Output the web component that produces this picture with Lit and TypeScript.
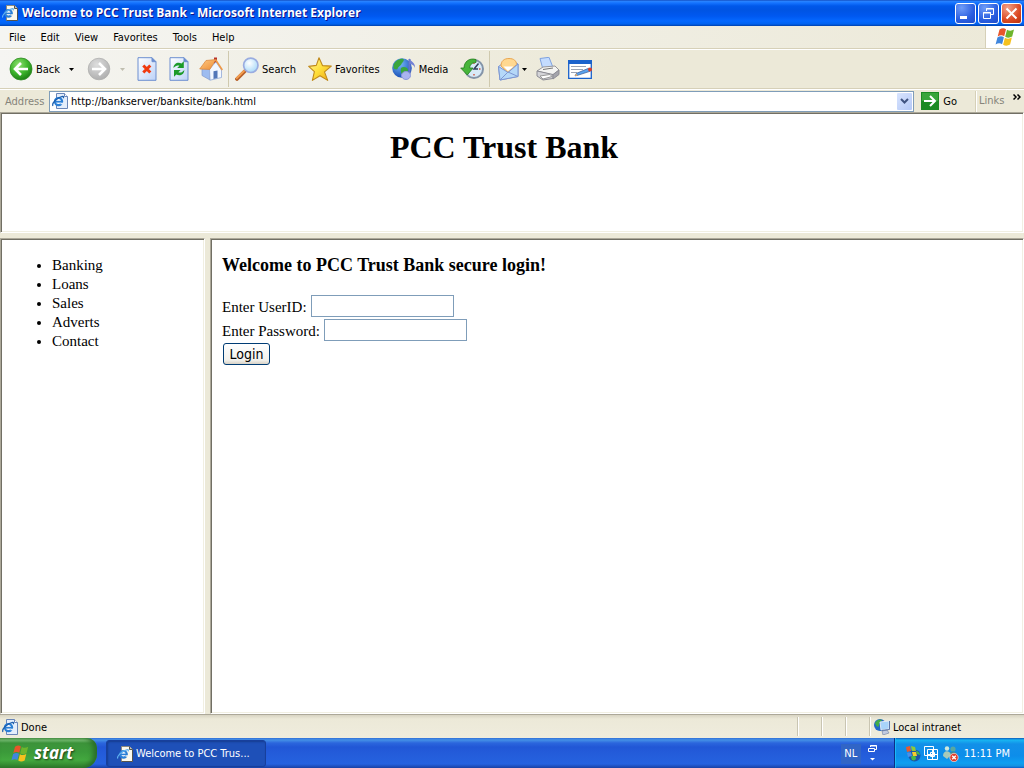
import { LitElement, html, svg, css } from "lit";
import { customElement } from "lit/decorators.js";

const pageIcon = svg`
  <path d="M4.500 .5h8l3 3v12h-11z" fill="#e4eefb" stroke="#6a86b8"/>
  <path d="M12.500 .5v3h3" fill="#fff" stroke="#6a86b8"/>
  <circle cx="6.500" cy="8.600" r="3.600" fill="#fff" stroke="#2a7fd6" stroke-width="2.200"/>
  <path d="M3 8.700h7.400" stroke="#2a7fd6" stroke-width="1.800"/>
  <path d="M8.500 9.700h3.500v1.600h-3.500z" fill="#e4eefb"/>
  <path d="M.9 12.900C-.4 10 5 4.500 10.600 3.400c1.200-.1 1.200.8.5 1.800" fill="none" stroke="#1c5fae" stroke-width="1.200"/>`;

const darkPageIcon = svg`
  <path d="M4.500 .5h8l3 3v12h-11z" fill="#fbf9ee" stroke="#8c8a80"/>
  <path d="M12.500 .5v3h3" fill="#c8c6ba" stroke="#55534c"/>
  <path d="M4.500 15.500h11v-12" fill="none" stroke="#55534c"/>
  <circle cx="6.500" cy="8.300" r="3.300" fill="#fff" stroke="#2a7fd6" stroke-width="2.200"/>
  <path d="M3.500 8.400h6.500" stroke="#2a7fd6" stroke-width="1.600"/>
  <path d="M8.500 9.300h3v1.400h-3z" fill="#fbf9ee"/>
  <path d="M.7 12.600C-.4 10 5 4.800 10.400 3.600c1.200-.1 1.200.8.5 1.800" fill="none" stroke="#5fb0f0" stroke-width="1.200"/>`;

const flag = svg`
  <path d="M5.500 2.500c2.500-1.500 4.500-1.500 6.500-.3l-1.800 7c-2-1.200-4-1.200-6.500.3z" fill="#e8562a"/>
  <path d="M13 2.800c2.300 1.300 4.500 1.300 7-.2l-1.800 7c-2.500 1.500-4.700 1.500-7 .2z" fill="#6db52c"/>
  <path d="M3.400 10.500c2.500-1.500 4.500-1.500 6.500-.3l-1.800 7c-2-1.200-4-1.200-6.500.3z" fill="#3f86dd"/>
  <path d="M10.900 10.800c2.300 1.300 4.500 1.300 7-.2l-1.800 7c-2.500 1.500-4.700 1.500-7 .2z" fill="#f5c11e"/>`;

const icon = (w: number, h: number, body: unknown, box = `0 0 ${w} ${h}`) =>
  html`<svg width=${w} height=${h} viewBox=${box} aria-hidden="true">${body}</svg>`;

const caret = (color: string) =>
  icon(5, 3, svg`<path d="M0 0h5L2.500 3z" fill=${color}/>`);

const art = {
  back: svg`
    <defs><radialGradient id="bg" cx=".4" cy=".3" r=".75"><stop offset="0" stop-color="#8fe070"/><stop offset=".55" stop-color="#3db52c"/><stop offset="1" stop-color="#187a12"/></radialGradient></defs>
    <circle cx="12" cy="12" r="11" fill="url(#bg)" stroke="#2f8a22" stroke-width=".8"/>
    <path d="M19 12H7M12 6l-6 6 6 6" fill="none" stroke="#fff" stroke-width="2.600"/>`,
  forward: svg`
    <defs><radialGradient id="fg" cx=".4" cy=".3" r=".8"><stop offset="0" stop-color="#dedede"/><stop offset="1" stop-color="#a9a9a9"/></radialGradient></defs>
    <circle cx="12" cy="12" r="10.800" fill="url(#fg)" stroke="#b0b0ae" stroke-width=".8"/>
    <path d="M5 12h12M12 6l6 6-6 6" fill="none" stroke="#fff" stroke-width="2.600"/>`,
  stop: svg`
    <defs><linearGradient id="sp" x2="1" y2="1"><stop offset="0" stop-color="#fff"/><stop offset="1" stop-color="#bcd2f8"/></linearGradient></defs>
    <path d="M3 .7h14l4 4v18.600h-18z" fill="url(#sp)" stroke="#6d8fd0"/>
    <path d="M17 .7v4h4" fill="#6d8fd0" stroke="#6d8fd0"/>
    <path d="M8.300 8.500l7 7M15.300 8.500l-7 7" stroke="#f03a10" stroke-width="3"/>`,
  refresh: svg`
    <path d="M3 .7h14l4 4v18.600h-18z" fill="url(#sp)" stroke="#6d8fd0"/>
    <path d="M17 .7v4h4" fill="#6d8fd0" stroke="#6d8fd0"/>
    <path d="M6.500 11c0-4.500 4.500-6.500 8-4.500l2.300-2.300V11h-6.600l2.200-2.200c-2-1-4 0-5.900 2.200z" fill="#1c9a2a"/>
    <path d="M17.300 13c0 4.500-4.500 6.500-8 4.500L7 19.800V13h6.600l-2.200 2.200c2 1 4 0 5.900-2.200z" fill="#1c9a2a"/>`,
  home: svg`
    <defs><linearGradient id="rf" x2="1" y2="1"><stop offset="0" stop-color="#fdca85"/><stop offset="1" stop-color="#ee8c34"/></linearGradient></defs>
    <path d="M15 .5h3v6h-3z" fill="#b8322a"/>
    <path d="M3 11v7.500l8 4.500V10z" fill="#9dbcf0" stroke="#7f98cc" stroke-width=".7"/>
    <path d="M10.500 12L17 5l5.500 8v7.500L11 23.200z" fill="#f2f7ff" stroke="#8fa8d8" stroke-width=".8"/>
    <path d="M14.500 14.200l4-.8v7.500l-4 1z" fill="#5377b8"/>
    <path d="M.7 12L7 3.500 17 2.500 10.800 12.500z" fill="url(#rf)" stroke="#d98238" stroke-width=".7"/>
    <path d="M16.600 2.800L23.300 13" stroke="#ee9846" stroke-width="1.600"/>`,
  search: svg`
    <defs><radialGradient id="ln" cx=".4" cy=".35" r=".7"><stop offset="0" stop-color="#fff"/><stop offset="1" stop-color="#a5d8f8"/></radialGradient></defs>
    <path d="M2 22l8-8" stroke="#b8602a" stroke-width="3.800" stroke-linecap="round"/>
    <path d="M1.800 21.200l7.300-7.300" stroke="#f6a050" stroke-width="1.800" stroke-linecap="round"/>
    <circle cx="15.800" cy="8.300" r="7.200" fill="url(#ln)" stroke="#9aace0" stroke-width="1.700"/>`,
  star: svg`
    <defs><linearGradient id="st" x2="1" y2="1"><stop offset="0" stop-color="#fff7a8"/><stop offset=".5" stop-color="#ffdf3a"/><stop offset="1" stop-color="#eda616"/></linearGradient></defs>
    <path d="M11 .8l3.500 7.800 8.800.5-6.800 5.800 3.200 8.500-7.700-4.700-7.600 4.700 2-8.700L.7 9.400l7.600-1z" fill="url(#st)" stroke="#c08a1c" stroke-width="1.100" stroke-linejoin="round"/>`,
  media: svg`
    <defs><radialGradient id="gl" cx=".4" cy=".3" r=".8"><stop offset="0" stop-color="#74b8f8"/><stop offset="1" stop-color="#0b3fae"/></radialGradient></defs>
    <circle cx="10" cy="11" r="9.800" fill="url(#gl)"/>
    <path d="M1.500 8c2-5 7-7 10-6 1 2-1 3-2 5-1 2-3 2-4 5-1 1-3.500 0-4-1zM9 11c2-2 7-1 7 2s-4 7-5 6-3-5-2-8z" fill="#3aa63e"/>
    <path d="M17.500 2v15" stroke="#6474c8" stroke-width="2"/>
    <path d="M17.500 1c1 4 6 4 5.500 10-1-3-3-4-5.500-4z" fill="#7280d4"/>
    <ellipse cx="14" cy="18.500" rx="4.500" ry="4" fill="#aab4f0" stroke="#8c98dc"/>`,
  history: svg`
    <circle cx="14" cy="12" r="9" fill="#d8eaf8" stroke="#8494a8" stroke-width="2"/>
    <path d="M14 5.500V7M20.500 12H19M14 18.500V17" stroke="#d0523a" stroke-width="1.400"/>
    <path d="M18.500 6.500L14 12h4" fill="none" stroke="#33405c" stroke-width="1.500"/>
    <path d="M16 2.500C9 .5 4 5 4 11H.7l6.600 7 5.700-7H9.700c0-3 2-5.500 6.300-5.500z" fill="#48b53a" stroke="#237c1e" stroke-width=".8"/>`,
  mail: svg`
    <path d="M1.500 9.500L12 2l9 5v12.500L3 23z" fill="#cfe4fb" stroke="#7d97d2"/>
    <path d="M4 9c0-5 3-7.500 8-7.500s7.500 2.500 7.500 6L11 15.500z" fill="#ffd890" stroke="#eaa650"/>
    <path d="M6.500 9.500h10L11 14z" fill="#fff"/>
    <path d="M1.500 9.500l9.500 6 10-8.500v12.500L3 23z" fill="#b5d8f8" stroke="#7d97d2"/>
    <path d="M3 23l8-8 10 4.500" fill="none" stroke="#7d97d2"/>`,
  print: svg`
    <path d="M4 1.500l9-1.200 4 10.200-10 2z" fill="#c4dcff" stroke="#7fa2e0"/>
    <path d="M1 14l6-4 12-1 4 4-6 5z" fill="#f4f4f2" stroke="#96969a"/>
    <path d="M1 14v5l6 4 10-1.500v-4z" fill="#d4d4d8" stroke="#8c8c94"/>
    <path d="M17 17.500l6-4.500v4.500l-6 4.500z" fill="#a4a4ac" stroke="#8c8c94"/>
    <path d="M4 19l10-1.500 2 2-9 2.500z" fill="#fff" stroke="#999"/>
    <path d="M7 12.500l10-1.500" stroke="#777"/>`,
  edit: svg`
    <path d="M.7 3.700h22.600v17.600H.7z" fill="#fff" stroke="#1a62cc" stroke-width="1.300"/>
    <path d="M0 3h24v4H0z" fill="#1a62cc"/>
    <path d="M3 9.500h15M3 12.500h12M3 15.500h6" stroke="#9ba4b4"/>
    <path d="M9 18.500l-2 .3 1.500-2.500 12-5 1.500 3z" fill="#5aa4f0" stroke="#3a5890" stroke-width=".7"/>
    <circle cx="22" cy="12.500" r="2" fill="#d8402c"/>
    <path d="M7 19l2.500-.3-1.200-2.200z" fill="#f2b060"/>`,
};

interface Tool {
  label: string;
  art: unknown;
  text?: string;
  menu?: string;
  kind?: string;
}

const toolGroups: Tool[][] = [
  [
    { label: "Back", art: art.back, text: "Back", menu: "#000", kind: "nav" },
    { label: "Forward", art: art.forward, menu: "#c0beb0", kind: "next" },
    { label: "Stop", art: art.stop },
    { label: "Refresh", art: art.refresh },
    { label: "Home", art: art.home },
  ],
  [
    { label: "Search", art: art.search, text: "Search", kind: "worded" },
    { label: "Favorites", art: art.star, text: "Favorites", kind: "worded" },
    { label: "Media", art: art.media, text: "Media", kind: "worded" },
    { label: "History", art: art.history },
  ],
  [
    { label: "Mail", art: art.mail, menu: "#000", kind: "mail" },
    { label: "Print", art: art.print },
    { label: "Edit", art: art.edit },
  ],
];

const base = css`
  * { box-sizing: border-box; }
  svg { display: block; flex: none; }
  button {
    font: inherit; color: inherit; background: none; border: 0; padding: 0; margin: 0;
    display: flex; align-items: center;
  }
`;

@customElement("browser-chrome")
class BrowserChrome extends LitElement {
  static styles = [base, css`
    :host { display: block; background: #ece9d8; }
    .title {
      display: flex; align-items: center; height: 26px; padding: 0 2px;
      background: linear-gradient(#0a3cae 0, #2c86ff 1px, #1473ff 3px, #0058ea 6px, #0054e3 10px, #0058f0 16px, #0468ff 21px, #0062ef 24px, #0040ab 26px);
    }
    .title h1 {
      flex: 1; margin: 0 0 0 4px; font: bold 12px/20px "Open Sans", sans-serif; color: #fff;
      text-shadow: 1px 1px #0f1089; white-space: nowrap;
    }
    .controls { display: flex; gap: 2px; }
    .controls button {
      width: 21px; height: 21px; justify-content: center; border: 1px solid #fff; border-radius: 3px;
      background: radial-gradient(circle at 30% 20%, #6f9cf8, #2a5ee0 60%, #1f4cc8);
    }
    .controls .close { background: radial-gradient(circle at 30% 20%, #f2a088, #dc4a24 60%, #b8320e); }
    .menus {
      display: flex; height: 24px; border-bottom: 1px solid #fff;
      box-shadow: inset 0 -1px #d6d0b8; background: linear-gradient(90deg, #f5f5f2, #ece9d8);
    }
    .menus nav { display: flex; flex: 1; padding-left: 1px; }
    .menus nav button { padding: 2px 8px 0; height: 22px; }
    .menus nav button + button { padding-left: 7px; }
    .brand {
      width: 39px; display: flex; justify-content: center; align-items: center;
      background: #fff; border-left: 1px solid #d6d0b8; border-bottom: 1px solid #d6d0b8;
    }
    .tools {
      display: flex; align-items: center; height: 39px; padding-left: 1px;
      border-bottom: 1px solid #d6d0b8; background: linear-gradient(90deg, #f5f5f2, #ece9d8 60%);
    }
    .group { display: flex; height: 36px; padding-right: 1px; }
    .group + .group { border-left: 1px solid #cfc9ae; padding-left: 2px; }
    .group button { padding: 0 4px; gap: 3px; }
    .group span { padding-top: 1px; }
    .group .nav { padding: 0 5px 0 8px; }
    .group .nav svg + span { margin-right: 6px; }
    .group .next { padding: 0 6px 0 8px; gap: 9px; }
    .group .worded { padding-right: 8px; }
    .group .mail { padding: 0 5px; gap: 1px; }
    .address { display: flex; align-items: center; height: 23px; border-top: 1px solid #fff; }
    .address label { width: 49px; padding: 1px 0 0 5px; color: #86847a; }
    .combo {
      flex: 1; display: flex; align-items: center; height: 21px; padding: 1px 1px 1px 2px;
      border: 1px solid #7f9db9; background: #fff;
    }
    .combo input {
      flex: 1; min-width: 0; border: 0; outline: 0; padding: 2px 0 0 3px; background: none;
      font: inherit; color: #000;
    }
    .combo button {
      width: 15px; height: 17px; justify-content: center; border-radius: 1px;
      background: linear-gradient(135deg, #d8e4fe, #b4c8f6);
    }
    .go { gap: 4px; padding: 0 18px 0 7px; }
    .go span { padding-top: 1px; }
    .links {
      display: flex; align-items: center; height: 21px; width: 49px; padding: 0 3px;
      border-left: 1px solid #d6d0b8; box-shadow: inset 1px 0 #fff; color: #86847a;
    }
    .links button { margin-left: auto; height: 12px; align-self: flex-start; }
  `];

  tool(t: Tool) {
    return html`<button class=${t.kind ?? "plain"} aria-label=${t.label} ?disabled=${t.kind === "next"}>
      ${icon(24, 24, t.art)}${t.text ? html`<span>${t.text}</span>` : ""}${t.menu ? caret(t.menu) : ""}
    </button>`;
  }

  render() {
    return html`
      <header class="title">
        ${icon(16, 16, darkPageIcon)}
        <h1>Welcome to PCC Trust Bank - Microsoft Internet Explorer</h1>
        <div class="controls">
          <button aria-label="Minimize">${icon(13, 13, svg`<path d="M1 9h7v3H1z" fill="#fff"/>`)}</button>
          <button aria-label="Restore">${icon(13, 13, svg`<path d="M4.500 4V1.500h7v6H9M4 2h8M1.500 5.500h7v6h-7zM1 6h8" fill="none" stroke="#fff"/>`)}</button>
          <button class="close" aria-label="Close">${icon(13, 13, svg`<path d="M1.500 1.500l10 10M11.500 1.500l-10 10" stroke="#fff" stroke-width="2"/>`)}</button>
        </div>
      </header>
      <div class="menus">
        <nav>${["File", "Edit", "View", "Favorites", "Tools", "Help"].map((m) => html`<button>${m}</button>`)}</nav>
        <div class="brand">${icon(22, 20, flag)}</div>
      </div>
      <div class="tools">${toolGroups.map((g) => html`<div class="group">${g.map((t) => this.tool(t))}</div>`)}</div>
      <div class="address">
        <label for="url">Address</label>
        <div class="combo">
          ${icon(16, 16, pageIcon)}
          <input id="url" value="http://bankserver/banksite/bank.html" />
          <button aria-label="Show history">${icon(9, 6, svg`<path d="M1 1l3.500 3.500L8 1" fill="none" stroke="#3f5380" stroke-width="2"/>`)}</button>
        </div>
        <button class="go">
          ${icon(18, 18, svg`<path d="M0 0h18v18H0z" fill="#1c8a22"/><path d="M1 1h16v8H1z" fill="#38a53a"/><path d="M3 9h11M9 4l5 5-5 5" fill="none" stroke="#fff" stroke-width="2"/>`)}
          <span>Go</span>
        </button>
        <div class="links">Links<button aria-label="More links">${icon(8, 6, svg`<path d="M.5 .5L3 3 .5 5.500M4.500 .5L7 3 4.500 5.500" fill="none" stroke="#000" stroke-width="1.500"/>`)}</button></div>
      </div>`;
  }
}

@customElement("bank-page")
class BankPage extends LitElement {
  static styles = css`
    * { box-sizing: border-box; }
    :host {
      display: flex; flex-direction: column; background: #ece9d8; color: #000;
      font: 15px/19px "Liberation Serif", serif;
    }
    .frame {
      background: #fff; border: 1px solid; border-color: #aca899 #fff #fff #aca899;
      box-shadow: inset 1px 1px #716f64, inset -1px -1px #f1efe2; padding: 17px 11px;
    }
    .banner { height: 121px; margin-bottom: 5px; padding: 16px 27px 0 11px; }
    h1 { margin: 0; text-align: center; font-size: 32px; line-height: 37px; }
    .columns { flex: 1; display: grid; grid-template-columns: 205px 1fr; gap: 5px; }
    ul { margin: 0; padding-left: 40px; }
    h3 { margin: 0 0 20px; font-size: 18px; line-height: 19px; }
    .row { display: flex; align-items: flex-end; gap: 4px; height: 22px; margin-bottom: 2px; }
    .row input {
      width: 143px; height: 22px; border: 1px solid #7f9db9; background: #fff; padding: 2px; outline: 0;
    }
    form button {
      display: block; margin-left: 1px; width: 47px; height: 22px; padding: 0;
      font: 14px/18px "DejaVu Sans Condensed", "Noto Sans", sans-serif; color: #000;
      border: 1px solid #003c74; border-radius: 3px;
      background: linear-gradient(#fff, #f2f1ec 80%, #d8d2c6);
    }
  `;

  render() {
    return html`
      <header class="frame banner"><h1>PCC Trust Bank</h1></header>
      <div class="columns">
        <nav class="frame">
          <ul>${["Banking", "Loans", "Sales", "Adverts", "Contact"].map((t) => html`<li>${t}</li>`)}</ul>
        </nav>
        <main class="frame">
          <h3>Welcome to PCC Trust Bank secure login!</h3>
          <form @submit=${(e: Event) => e.preventDefault()}>
            <div class="row"><label for="user">Enter UserID:</label><input id="user" type="text" /></div>
            <div class="row"><label for="pass">Enter Password:</label><input id="pass" type="password" /></div>
            <button type="submit">Login</button>
          </form>
        </main>
      </div>`;
  }
}

@customElement("status-bar")
class StatusBar extends LitElement {
  static styles = [base, css`
    :host {
      display: flex; align-items: center; height: 23px; padding-left: 2px;
      border-top: 1px solid #aca899; background: linear-gradient(#d8d4c2, #ece9d8 4px, #efecdd);
    }
    span { padding-top: 2px; }
    .status { display: flex; align-items: center; flex: 1; gap: 3px; }
    .cell { width: 24px; height: 19px; border-left: 1px solid #c9c5b2; box-shadow: inset 1px 0 #fff; }
    .zone {
      display: flex; align-items: center; gap: 3px; width: 155px; height: 19px; padding-left: 4px;
      border-left: 1px solid #c9c5b2; box-shadow: inset 1px 0 #fff;
    }
  `];

  render() {
    return html`
      <div class="status">${icon(16, 16, pageIcon)}<span>Done</span></div>
      <div class="cell"></div><div class="cell"></div><div class="cell"></div>
      <div class="zone">
        ${icon(16, 16, svg`
          <circle cx="6" cy="6" r="6" fill="#2368c8"/>
          <path d="M1 4c2-4 6-4 7-3-1 2-3 2-3 5s-3 2-4-2z" fill="#42ad48"/>
          <path d="M6 3l9-1v8l-8 1z" fill="#a8d4fa" stroke="#dfe9f5"/>
          <path d="M8 12l5-1 2 3-6 2z" fill="#c2cbe0" stroke="#7c8aa8" stroke-width=".7"/>
          <path d="M15.500 2v8.500l-8 1" fill="none" stroke="#5b76a8"/>`)}
        <span>Local intranet</span>
      </div>`;
  }
}

@customElement("task-bar")
class TaskBar extends LitElement {
  static styles = [base, css`
    :host {
      display: flex; height: 30px; color: #fff;
      background: linear-gradient(#2f6fd8 0, #4490e6 2px, #2b66dd 5px, #2157d6 9px, #245ddb 17px, #2562df 26px, #1941a5 30px);
    }
    .start {
      width: 97px; gap: 4px; padding: 0 0 0 10px; border-radius: 0 10px 14px 0;
      font: italic bold 17px/24px "Open Sans", sans-serif; text-shadow: 1px 1px 2px #1b3c16;
      background: linear-gradient(#5fae5c 0, #7cc278 2px, #3c933a 5px, #3b9a3a 14px, #43a83f 22px, #2f7e2c 30px);
      box-shadow: inset -4px 0 5px #2a6e28;
    }
    .task {
      align-self: center; width: 160px; height: 27px; margin: 1px auto 0 9px; padding-left: 10px; gap: 3px;
      border: 1px solid #173f9c; border-radius: 3px; background: #1e50b8; box-shadow: inset 1px 1px 2px #163c90;
    }
    .lang { align-self: center; width: 20px; height: 20px; justify-content: center; background: #3165c6; margin: 1px 5px 0 0; }
    .opts { width: 14px; justify-content: center; margin-right: 14px; }
    .tray {
      display: flex; align-items: center; gap: 2px; padding: 0 14px 0 9px; border-left: 1px solid #0c2f86;
      background: linear-gradient(#0c59b9 0, #18b5f2 2px, #1290e8 6px, #0d8dea 18px, #0d9ff1 25px, #1392e2 28px, #095bc9 30px);
      box-shadow: inset 1px 0 #1bb9f6;
    }
    time { margin-left: 3px; padding-top: 1px; }
  `];

  render() {
    return html`
      <button class="start">${icon(20, 19, flag, "0 0 22 20")}<span>start</span></button>
      <button class="task">${icon(16, 16, darkPageIcon)}<span>Welcome to PCC Trus...</span></button>
      <button class="lang">NL</button>
      <button class="opts" aria-label="Language options">
        ${icon(9, 18, svg`<path d="M2.500 3V1.500h6v4H7M2 2h7M.5 4.500h6v3h-6z" fill="none" stroke="#fff"/><path d="M2 14h5l-2.500 2.500z" fill="#fff"/>`)}
      </button>
      <div class="tray">
        ${icon(17, 17, svg`
          <circle cx="10.500" cy="10.500" r="6" fill="#1c54a8"/>
          <path d="M7 12c2-3 5-1 5 1s-2 3-4 2zM12 6c2 0 4 2 4 4l-3-1z" fill="#48b848"/>
          <path d="M2 2l4-1 1 5-4 1z" fill="#e85a2c"/><path d="M7 1l4 1 1 4-4 0z" fill="#8cc83a"/>
          <path d="M3 8l4-1 1 4-4 1z" fill="#4a90e8"/><path d="M8 7l4 0 1 4-4 0z" fill="#f7cc2c"/>`)}
        ${icon(17, 17, svg`
          <path d="M1.500 1.500h9v9h-9zM4.500 4.500h10v10h-10z" fill="none" stroke="#fff"/>
          <path d="M7.500 7.500h4v4h-4zM9.500 4v10M4 9.500h10" fill="none" stroke="#fff"/>`)}
        ${icon(17, 17, svg`
          <circle cx="11" cy="4" r="2.600" fill="#58a8a0"/><path d="M7 12c0-7 8-7 8-1z" fill="#3c8c98"/>
          <circle cx="5" cy="3.500" r="2.200" fill="#cfe8dc"/><path d="M1 11c0-6 7-6 8-1l-4 4z" fill="#a9c9b8"/>
          <circle cx="12" cy="12.500" r="4.200" fill="#e23c2a" stroke="#fff" stroke-width=".6"/>
          <path d="M10.200 10.700l3.600 3.600M13.800 10.700l-3.600 3.600" stroke="#fff" stroke-width="1.400"/>`)}
        <time>11:11 PM</time>
      </div>`;
  }
}

@customElement("app-root")
class AppRoot extends LitElement {
  static styles = css`
    :host {
      display: flex; flex-direction: column; min-height: 100vh; background: #ece9d8; color: #000;
      font: 11px/14px "DejaVu Sans Condensed", "Noto Sans", sans-serif;
    }
    bank-page { flex: 1; }
  `;

  render() {
    return html`
      <browser-chrome></browser-chrome>
      <bank-page></bank-page>
      <status-bar></status-bar>
      <task-bar></task-bar>`;
  }
}
